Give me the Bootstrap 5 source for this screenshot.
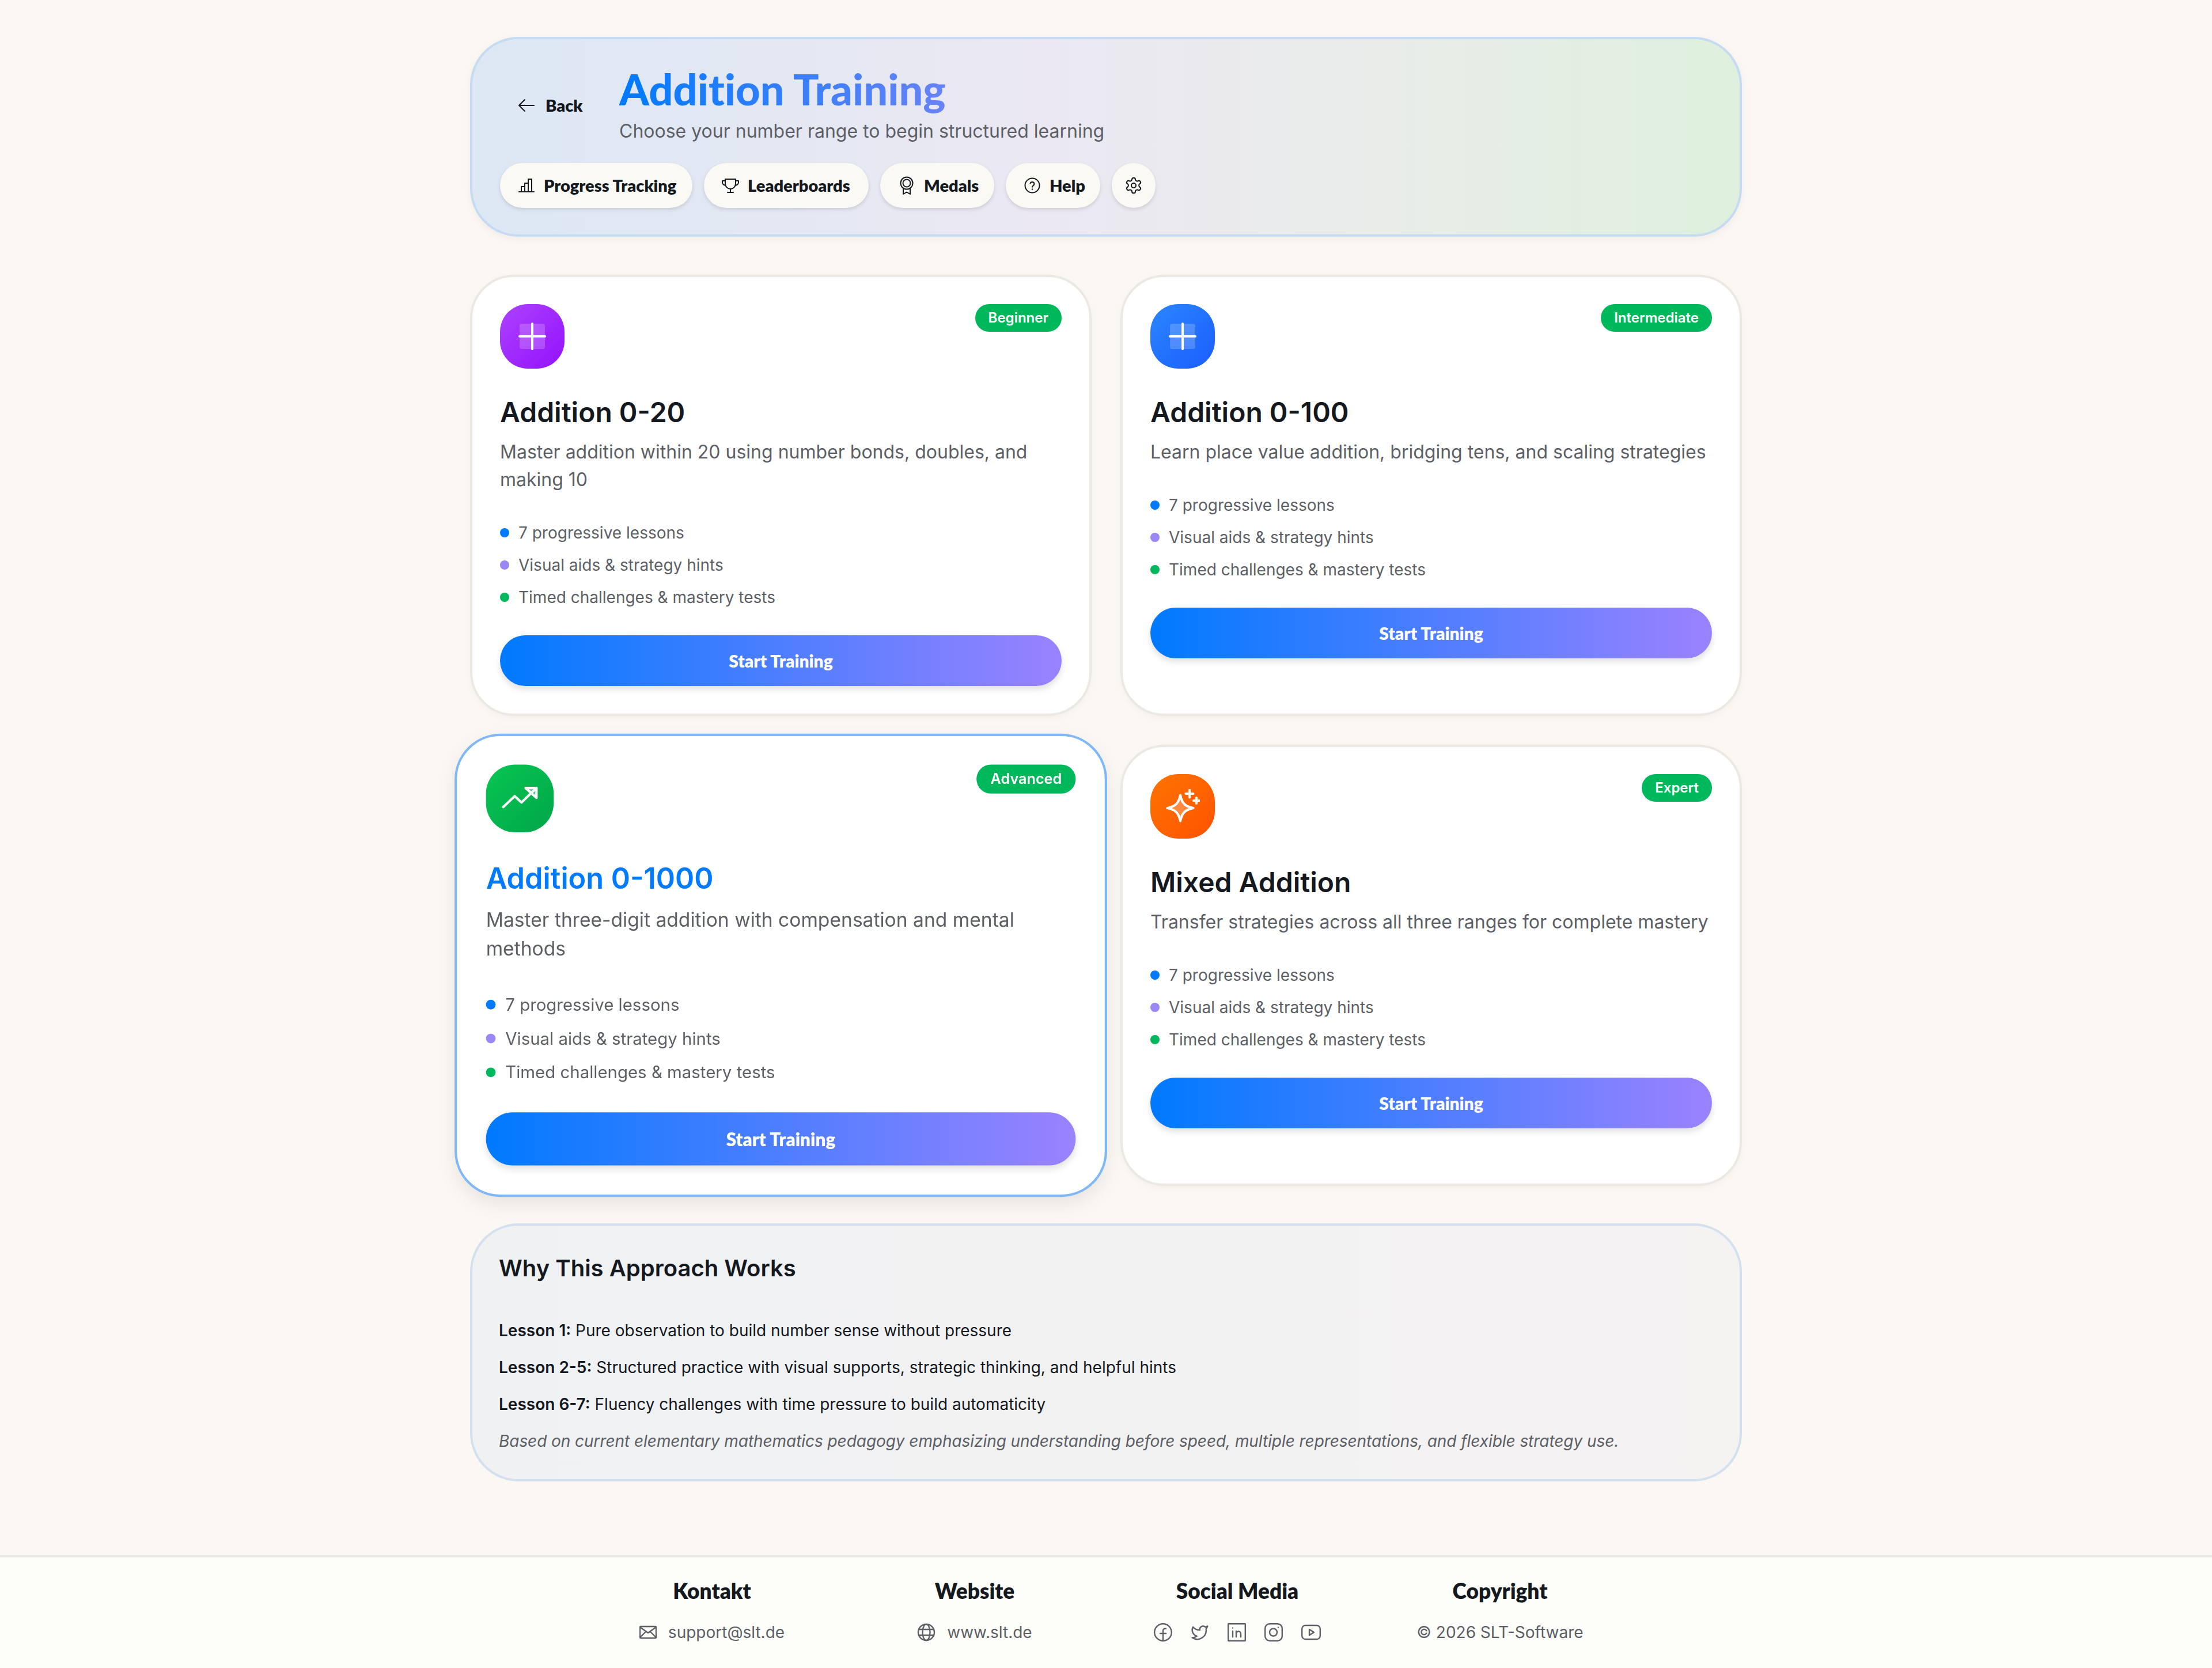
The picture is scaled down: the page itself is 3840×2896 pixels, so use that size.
<!DOCTYPE html>
<html lang="en">
<head>
    <meta charset="UTF-8">
    <meta name="viewport" content="width=device-width, initial-scale=1.0">
    <title>Addition Training</title>
    <link href="https://cdn.jsdelivr.net/npm/bootstrap@5.3.0/dist/css/bootstrap.min.css" rel="stylesheet">
    <style>
        body {
            background: #fbf8f3;
            font-family: "Inter", "Liberation Sans", sans-serif;
            color: #14181f;
            min-height: 2896px;
        }
        .page-wrap { width: 2208px; margin: 0 auto; padding-top: 64px; }
        .display-font { font-family: "Lato", "Liberation Sans", sans-serif; font-variant-ligatures: none; }
        svg { display: block; flex: none; }
        .ic { fill: none; stroke: currentColor; stroke-linecap: round; stroke-linejoin: round; }

        .top-panel {
            height: 347px;
            padding: 44px 48px 0;
            border: 4px solid #c6daf2;
            border-radius: 84px;
            background: linear-gradient(90deg, #dce8f4 0%, #ebe8f2 45%, #e9ece9 72%, #def0dd 100%);
            box-shadow: 0 4px 14px rgba(0,0,0,.05);
        }
        .back-btn {
            width: 207px;
            flex: none;
            padding-left: 30px;
            gap: 17px;
            font-size: 29px;
            font-weight: 800;
            color: #14181f;
            text-decoration: none;
        }
        .page-title {
            font-size: 74px;
            font-weight: 900;
            line-height: 86px;
            margin: 0;
            display: block;
            background: linear-gradient(90deg, #007aff, #9b87f5);
            -webkit-background-clip: text;
            background-clip: text;
            color: transparent;
        }
        .page-sub { font-size: 32px; line-height: 50px; color: #5c5f66; margin: 5px 0 0; }
        .pill-row { gap: 20px; margin-top: 30px; }
        .pill-btn {
            flex: none;
            height: 78px;
            padding: 0 30px;
            gap: 14px;
            border-radius: 39px;
            background: #faf9f4;
            font-size: 29px;
            font-weight: 800;
            white-space: nowrap;
            color: #14181f;
            text-decoration: none;
            box-shadow: 0 3px 6px rgba(0,0,0,.12);
        }
        .pill-btn.only-icon { padding: 0 22px; }
        .w-progress { width: 334px; }
        .w-boards { width: 286px; }
        .w-medals { width: 198px; }
        .w-help { width: 164px; }

        .level-grid { --bs-gutter-x: 50px; --bs-gutter-y: 50px; margin-top: 16px; }
        .level-card {
            height: 766px;
            padding: 47px 48px;
            border: 4px solid #ece9e3;
            border-radius: 76px;
            background: #fff;
            box-shadow: 0 4px 12px rgba(0,0,0,.03);
        }
        .level-card.is-hover {
            transform: scale(1.05);
            border-color: #80b8f5;
            box-shadow: 0 12px 30px rgba(0,0,0,.08);
        }
        .level-card.is-hover .level-name { color: #007aff; }
        .level-icon {
            width: 112px;
            height: 112px;
            border-radius: 48px;
            color: #fff;
        }
        .ic-purple { background: linear-gradient(135deg, #ad42ff, #9312fb); }
        .ic-blue { background: linear-gradient(135deg, #2b86ff, #1b5dff); }
        .ic-green { background: linear-gradient(135deg, #08c653, #00a648); }
        .ic-orange { background: linear-gradient(135deg, #ff7500, #ff5200); }
        .level-tag {
            height: 48px;
            padding: 0 23px;
            border-radius: 24px;
            background: #00b85c;
            color: #fff;
            font-size: 24px;
            font-weight: 600;
        }
        .level-name { font-size: 48px; font-weight: 600; line-height: 60px; margin: 46px 0 15px; }
        .level-text { font-size: 32px; line-height: 48px; color: #5c5f66; margin: 0 0 48px; }
        .lesson-list { list-style: none; padding: 0; margin: 0 0 46px; }
        .lesson-list li { font-size: 28px; line-height: 40px; color: #5c5f66; margin-bottom: 16px; gap: 16px; }
        .lesson-list li:last-child { margin-bottom: 0; }
        .dot { width: 16px; height: 16px; border-radius: 50%; flex: none; }
        .dot-a { background: #007aff; }
        .dot-b { background: #9b87f5; }
        .dot-c { background: #00b85c; }
        .start-btn {
            height: 88px;
            border: 0;
            border-radius: 44px;
            background: linear-gradient(90deg, #007aff, #9b82ff);
            color: #fff;
            font-size: 30px;
            font-weight: 800;
            box-shadow: 0 6px 12px rgba(0,0,0,.12);
        }

        .why-panel {
            height: 448px;
            margin-top: 65px;
            padding: 44px 46px;
            border: 4px solid #d3e0f0;
            border-radius: 84px;
            background: linear-gradient(90deg, #eff1f3, #f5f2f2);
        }
        .why-panel h2 { font-size: 40px; font-weight: 600; line-height: 60px; margin: 0 0 56px; }
        .why-panel p { font-size: 28px; line-height: 44px; margin: 0 0 20px; color: #14181f; }
        .why-panel b { font-weight: 600; }
        .why-panel p.why-note { font-style: italic; color: #5c5f66; margin: 0; letter-spacing: -.06px; }

        .site-foot {
            margin-top: 128px;
            height: 196px;
            border-top: 4px solid #e8e6e0;
            background: #fdfdfa;
        }
        .foot-inner { width: 1824px; margin: 0 auto; padding-top: 36px; }
        .foot-inner h3 { font-size: 37px; font-weight: 800; line-height: 44px; margin: 0 0 30px; }
        .foot-line { height: 40px; gap: 20px; font-size: 28px; color: #5c5f66; }
        .foot-social { gap: 32px; color: #5c5f66; }
    </style>
</head>
<body>
    <div class="page-wrap">
        <header class="top-panel">
            <div class="d-flex align-items-center">
                <a href="#" class="back-btn d-flex align-items-center display-font">
                    <svg class="ic" width="32" height="32" viewBox="0 0 32 32" stroke-width="2"><path d="M3 16h26M13 6 3 16l10 10"/></svg>
                    Back
                </a>
                <div>
                    <h1 class="page-title display-font">Addition Training</h1>
                    <p class="page-sub">Choose your number range to begin structured learning</p>
                </div>
            </div>
            <div class="pill-row d-flex">
                <a href="#" class="pill-btn w-progress d-flex align-items-center display-font">
                    <svg class="ic" width="32" height="32" viewBox="0 0 32 32" stroke-width="2"><path d="M3 27h26M7 27v-9h6v9M13 27V12h0M13 12h6v15M19 5h6v22h-6z"/></svg>
                    Progress Tracking
                </a>
                <a href="#" class="pill-btn w-boards d-flex align-items-center display-font">
                    <svg class="ic" width="32" height="32" viewBox="0 0 32 32" stroke-width="2"><path d="M7 5h18v8a9 9 0 0 1-18 0zM7 8H2v2.500a5 5 0 0 0 5.500 5M25 8h5v2.500a5 5 0 0 1-5.500 5M16 22v6M11 28h10"/></svg>
                    Leaderboards
                </a>
                <a href="#" class="pill-btn w-medals d-flex align-items-center display-font">
                    <svg class="ic" width="32" height="32" viewBox="0 0 32 32" stroke-width="2"><circle cx="16" cy="12" r="10.500"/><circle cx="16" cy="12" r="6.500"/><path d="M10 21v10l6-3.500 6 3.500V21"/></svg>
                    Medals
                </a>
                <a href="#" class="pill-btn w-help d-flex align-items-center display-font">
                    <svg class="ic" width="32" height="32" viewBox="0 0 32 32" stroke-width="2"><circle cx="16" cy="16" r="12.500"/><path d="M12.500 12.500a3.600 3.600 0 0 1 7 1c0 2.400-3.500 3-3.500 5.200"/><path d="M16 22.500h.01" stroke-width="2.500"/></svg>
                    Help
                </a>
                <a href="#" class="pill-btn only-icon d-flex align-items-center" aria-label="Settings">
                    <svg class="ic" width="32" height="32" viewBox="0 0 24 24" stroke-width="1.500"><path d="M12.220 2h-.44a2 2 0 0 0-2 2v.18a2 2 0 0 1-1 1.730l-.43.25a2 2 0 0 1-2 0l-.15-.08a2 2 0 0 0-2.730.73l-.22.38a2 2 0 0 0 .73 2.730l.15.1a2 2 0 0 1 1 1.720v.51a2 2 0 0 1-1 1.740l-.15.09a2 2 0 0 0-.73 2.730l.22.38a2 2 0 0 0 2.730.73l.15-.08a2 2 0 0 1 2 0l.43.25a2 2 0 0 1 1 1.730V20a2 2 0 0 0 2 2h.44a2 2 0 0 0 2-2v-.18a2 2 0 0 1 1-1.730l.43-.25a2 2 0 0 1 2 0l.15.08a2 2 0 0 0 2.730-.73l.22-.39a2 2 0 0 0-.73-2.730l-.15-.08a2 2 0 0 1-1-1.740v-.5a2 2 0 0 1 1-1.740l.15-.09a2 2 0 0 0 .73-2.730l-.22-.38a2 2 0 0 0-2.730-.73l-.15.08a2 2 0 0 1-2 0l-.43-.25a2 2 0 0 1-1-1.730V4a2 2 0 0 0-2-2z"/><circle cx="12" cy="12" r="3"/></svg>
                </a>
            </div>
        </header>

        <div class="row row-cols-2 level-grid">
            <div class="col">
                <div class="card level-card">
                    <div class="d-flex justify-content-between align-items-start">
                        <div class="level-icon ic-purple d-flex align-items-center justify-content-center">
                            <svg class="ic" width="48" height="48" viewBox="0 0 24 24" stroke-width="2"><rect x="1" y="1" width="22" height="22" rx="2" fill="rgba(255,255,255,.2)" stroke="none"/><path d="M12 1v22M1 12h22"/></svg>
                        </div>
                        <span class="level-tag d-flex align-items-center">Beginner</span>
                    </div>
                    <h4 class="level-name">Addition 0-20</h4>
                    <p class="level-text">Master addition within 20 using number bonds, doubles, and making 10</p>
                    <ul class="lesson-list">
                        <li class="d-flex align-items-center"><span class="dot dot-a"></span>7 progressive lessons</li>
                        <li class="d-flex align-items-center"><span class="dot dot-b"></span>Visual aids &amp; strategy hints</li>
                        <li class="d-flex align-items-center"><span class="dot dot-c"></span>Timed challenges &amp; mastery tests</li>
                    </ul>
                    <button class="btn start-btn w-100 display-font">Start Training</button>
                </div>
            </div>
            <div class="col">
                <div class="card level-card">
                    <div class="d-flex justify-content-between align-items-start">
                        <div class="level-icon ic-blue d-flex align-items-center justify-content-center">
                            <svg class="ic" width="48" height="48" viewBox="0 0 24 24" stroke-width="2"><rect x="1" y="1" width="22" height="22" rx="2" fill="rgba(255,255,255,.2)" stroke="none"/><path d="M12 1v22M1 12h22"/></svg>
                        </div>
                        <span class="level-tag d-flex align-items-center">Intermediate</span>
                    </div>
                    <h4 class="level-name">Addition 0-100</h4>
                    <p class="level-text">Learn place value addition, bridging tens, and scaling strategies</p>
                    <ul class="lesson-list">
                        <li class="d-flex align-items-center"><span class="dot dot-a"></span>7 progressive lessons</li>
                        <li class="d-flex align-items-center"><span class="dot dot-b"></span>Visual aids &amp; strategy hints</li>
                        <li class="d-flex align-items-center"><span class="dot dot-c"></span>Timed challenges &amp; mastery tests</li>
                    </ul>
                    <button class="btn start-btn w-100 display-font">Start Training</button>
                </div>
            </div>
            <div class="col">
                <div class="card level-card is-hover">
                    <div class="d-flex justify-content-between align-items-start">
                        <div class="level-icon ic-green d-flex align-items-center justify-content-center">
                            <svg class="ic" width="60" height="60" viewBox="0 0 24 24" stroke-width="1.600"><path d="M15.800 5.100H23v6.500z" fill="rgba(255,255,255,.3)"/><path d="M23 5.100 13.100 14.700 8.600 10.500 1 17.700"/></svg>
                        </div>
                        <span class="level-tag d-flex align-items-center">Advanced</span>
                    </div>
                    <h4 class="level-name">Addition 0-1000</h4>
                    <p class="level-text">Master three-digit addition with compensation and mental methods</p>
                    <ul class="lesson-list">
                        <li class="d-flex align-items-center"><span class="dot dot-a"></span>7 progressive lessons</li>
                        <li class="d-flex align-items-center"><span class="dot dot-b"></span>Visual aids &amp; strategy hints</li>
                        <li class="d-flex align-items-center"><span class="dot dot-c"></span>Timed challenges &amp; mastery tests</li>
                    </ul>
                    <button class="btn start-btn w-100 display-font">Start Training</button>
                </div>
            </div>
            <div class="col">
                <div class="card level-card">
                    <div class="d-flex justify-content-between align-items-start">
                        <div class="level-icon ic-orange d-flex align-items-center justify-content-center">
                            <svg class="ic" width="60" height="60" viewBox="0 0 24 24" stroke-width="1.600"><path d="M10.400 4.200C11.600 9.900 13.700 12 19.400 13.200 13.700 14.400 11.600 16.500 10.400 22.200 9.200 16.500 7.100 14.400 1.400 13.200 7.100 12 9.200 9.900 10.400 4.200z" fill="rgba(255,255,255,.25)"/><path d="M16.800.6v5.200M14.200 3.200h5.200M21.600 6v4M19.600 8h4"/></svg>
                        </div>
                        <span class="level-tag d-flex align-items-center">Expert</span>
                    </div>
                    <h4 class="level-name">Mixed Addition</h4>
                    <p class="level-text">Transfer strategies across all three ranges for complete mastery</p>
                    <ul class="lesson-list">
                        <li class="d-flex align-items-center"><span class="dot dot-a"></span>7 progressive lessons</li>
                        <li class="d-flex align-items-center"><span class="dot dot-b"></span>Visual aids &amp; strategy hints</li>
                        <li class="d-flex align-items-center"><span class="dot dot-c"></span>Timed challenges &amp; mastery tests</li>
                    </ul>
                    <button class="btn start-btn w-100 display-font">Start Training</button>
                </div>
            </div>
        </div>

        <section class="why-panel">
            <h2>Why This Approach Works</h2>
            <p><b>Lesson 1:</b> Pure observation to build number sense without pressure</p>
            <p><b>Lesson 2-5:</b> Structured practice with visual supports, strategic thinking, and helpful hints</p>
            <p><b>Lesson 6-7:</b> Fluency challenges with time pressure to build automaticity</p>
            <p class="why-note">Based on current elementary mathematics pedagogy emphasizing understanding before speed, multiple representations, and flexible strategy use.</p>
        </section>
    </div>

    <footer class="site-foot">
        <div class="foot-inner row row-cols-4 g-0 text-center">
            <div class="col">
                <h3 class="display-font">Kontakt</h3>
                <div class="foot-line d-flex align-items-center justify-content-center">
                    <svg class="ic" width="30" height="30" viewBox="0 0 30 30" stroke-width="2.400"><rect x="1" y="5" width="28" height="20" rx="1.500"/><path d="m1 6 14 10L29 6M1 24l10-10M29 24 19 14"/></svg>
                    support@slt.de
                </div>
            </div>
            <div class="col">
                <h3 class="display-font">Website</h3>
                <div class="foot-line d-flex align-items-center justify-content-center">
                    <svg class="ic" width="32" height="32" viewBox="0 0 32 32" stroke-width="2.400"><circle cx="16" cy="16" r="14"/><ellipse cx="16" cy="16" rx="6.500" ry="14"/><path d="M3 11h26M3 21h26"/></svg>
                    www.slt.de
                </div>
            </div>
            <div class="col">
                <h3 class="display-font">Social Media</h3>
                <div class="foot-line foot-social d-flex align-items-center justify-content-center">
                    <svg class="ic" width="32" height="32" viewBox="0 0 32 32" stroke-width="2.400"><circle cx="16" cy="16" r="14.800"/><path d="M21 9.500h-1.500a3.500 3.500 0 0 0-3.500 3.500v18M11 18h10"/></svg>
                    <svg class="ic" width="32" height="32" viewBox="0 0 24 24" stroke-width="1.800"><path d="M22 4s-.7 2.100-2 3.400c1.600 10-9.400 17.300-18 11.600 2.200.1 4.400-.6 6-2C3 15.500.5 9.600 3 5c2.200 2.600 5.600 4.100 9 4-.9-4.200 4-6.600 7-3.800 1.100 0 3-1.200 3-1.200z"/></svg>
                    <svg class="ic" width="32" height="32" viewBox="0 0 32 32" stroke-width="2.400"><rect x="1.200" y="1.200" width="29.600" height="29.600" rx=".5"/><path d="M9 14v10M9 8.500h.01M15 24V14M15 18.500a4 4 0 0 1 8 0V24"/></svg>
                    <svg class="ic" width="32" height="32" viewBox="0 0 32 32" stroke-width="2.400"><rect x="1.200" y="1.200" width="29.600" height="29.600" rx="8"/><circle cx="15.500" cy="16" r="6.500"/><path d="M24 7.500h.01"/></svg>
                    <svg class="ic" width="34" height="32" viewBox="0 0 34 32" stroke-width="2.400"><rect x="1.200" y="4" width="31.600" height="24" rx="6"/><path d="M14 11v10l8-5z"/></svg>
                </div>
            </div>
            <div class="col">
                <h3 class="display-font">Copyright</h3>
                <div class="foot-line d-flex align-items-center justify-content-center">© 2026 SLT-Software</div>
            </div>
        </div>
    </footer>
    <script src="https://cdn.jsdelivr.net/npm/bootstrap@5.3.0/dist/js/bootstrap.bundle.min.js"></script>
</body>
</html>
